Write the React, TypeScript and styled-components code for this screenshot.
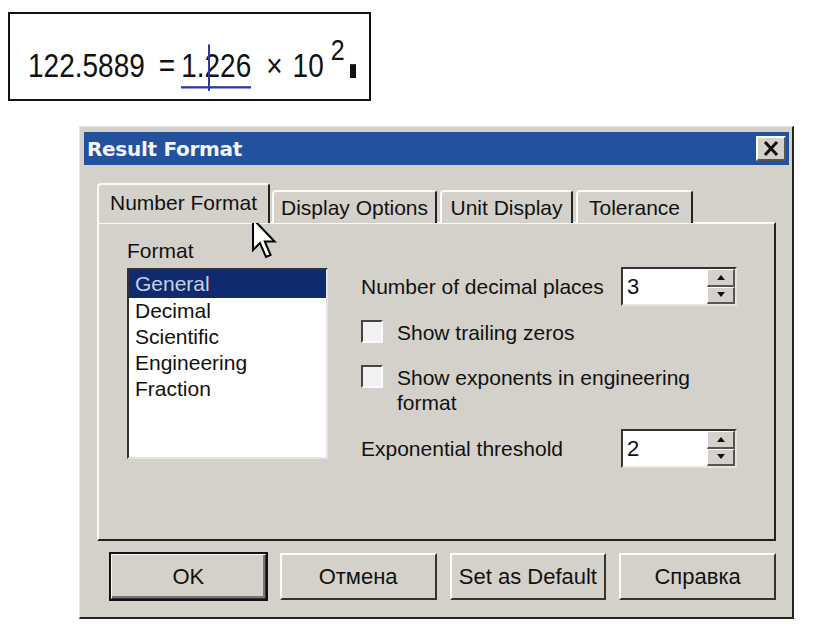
import React from "react";
import styled, { createGlobalStyle } from "styled-components";

const GlobalStyle = createGlobalStyle`
  html, body {
    margin: 0;
    padding: 0;
    background: #ffffff;
  }
  body {
    font-family: "Liberation Sans", Arial, sans-serif;
  }
`;

const Page = styled.div`
  position: relative;
  width: 816px;
  height: 638px;
  padding-top: 12px;
  box-sizing: border-box;
  overflow: hidden;
`;

// 수식 결과 박스
const FormulaBox = styled.div`
  margin-left: 8px;
  width: 363px;
  height: 89px;
  box-sizing: border-box;
  border: 2px solid #111;
  padding: 38px 0 0 18px;
  font-family: "Liberation Sans", Arial, sans-serif;
  font-size: 28px;
  line-height: 32px;
  color: #111;
  white-space: nowrap;
`;

const FormulaLine = styled.span`
  display: inline-block;
  transform: scaleY(1.16);
  transform-origin: 0 80%;
`;

const Token = styled.span<{ $gap?: number }>`
  margin-left: ${(p) => p.$gap ?? 0}px;
`;

const Underlined = styled.span<{ $gap?: number }>`
  position: relative;
  margin-left: ${(p) => p.$gap ?? 0}px;
  border-bottom: 2px solid #2d3aa6;
  padding-bottom: 2px;
`;

const Caret = styled.span`
  position: absolute;
  left: 27px;
  top: -3px;
  bottom: -4px;
  width: 2px;
  background: #2d3aa6;
`;

const Sup = styled.span<{ $gap?: number }>`
  font-size: 25px;
  line-height: 0;
  vertical-align: 15px;
  margin-left: ${(p) => p.$gap ?? 0}px;
`;

const Marker = styled.span`
  display: inline-block;
  width: 6px;
  height: 12px;
  background: #111;
  margin-left: 5px;
  vertical-align: -1px;
`;

// 대화상자
const Dialog = styled.div`
  margin: 25px 0 0 79px;
  width: 715px;
  height: 493px;
  box-sizing: border-box;
  background: #d4d1cb;
  border-top: 1px solid #e8e6e2;
  border-left: 1px solid #e8e6e2;
  border-right: 2px solid #222;
  border-bottom: 2px solid #222;
  padding: 5px 3px 0 4px;
  display: flex;
  flex-direction: column;
`;

const TitleBar = styled.div`
  height: 33px;
  background: #22519e;
  display: flex;
  align-items: center;
  justify-content: space-between;
  padding: 0 3px 0 3px;
`;

const Title = styled.span`
  color: #f4f4f4;
  font-family: "DejaVu Sans", "Liberation Sans", sans-serif;
  font-weight: bold;
  font-size: 20px;
  letter-spacing: -0.3px;
`;

const CloseButton = styled.div`
  width: 30px;
  height: 25px;
  box-sizing: border-box;
  background: #d4d1cb;
  border-top: 2px solid #fff;
  border-left: 2px solid #fff;
  border-right: 2px solid #555;
  border-bottom: 2px solid #555;
  display: flex;
  align-items: center;
  justify-content: center;
`;

const Body = styled.div`
  flex: 1;
  display: flex;
  flex-direction: column;
  padding: 18px 13px 0 13px;
`;

const TabRow = styled.div`
  display: flex;
  align-items: flex-end;
  height: 40px;
  position: relative;
  z-index: 1;
  margin-bottom: -1px;
`;

const Tab = styled.div<{ $active?: boolean; $width: number }>`
  width: ${(p) => p.$width}px;
  height: ${(p) => (p.$active ? 40 : 33)}px;
  box-sizing: border-box;
  background: #d4d1cb;
  border-top: 2px solid #fafafa;
  border-left: 2px solid #fafafa;
  border-right: 2px solid #222;
  border-top-left-radius: 4px;
  border-top-right-radius: 3px;
  margin-right: ${(p) => (p.$active ? 2 : 3)}px;
  display: flex;
  align-items: ${(p) => (p.$active ? "flex-start" : "center")};
  justify-content: center;
  padding-top: ${(p) => (p.$active ? 6 : 0)}px;
  font-size: 21px;
  color: #111;
  white-space: nowrap;
`;

const Panel = styled.div`
  height: 319px;
  box-sizing: border-box;
  border-top: 2px solid #fafafa;
  border-left: 2px solid #fafafa;
  border-right: 2px solid #222;
  border-bottom: 2px solid #222;
  display: flex;
  padding: 16px 0 0 28px;
  gap: 33px;
`;

const FormatColumn = styled.div`
  display: flex;
  flex-direction: column;
`;

const Label = styled.div`
  font-size: 21px;
  color: #111;
  height: 28px;
  line-height: 22px;
`;

const ListBox = styled.div`
  width: 201px;
  height: 191px;
  box-sizing: border-box;
  background: #fff;
  border-top: 2px solid #333;
  border-left: 2px solid #333;
  border-right: 2px solid #e6e4e0;
  border-bottom: 2px solid #e6e4e0;
`;

const ListItem = styled.div<{ $selected?: boolean }>`
  height: ${(p) => (p.$selected ? 28 : 26)}px;
  line-height: ${(p) => (p.$selected ? 28 : 26)}px;
  padding-left: 6px;
  font-size: 21px;
  background: ${(p) => (p.$selected ? "#0f2a6e" : "transparent")};
  color: ${(p) => (p.$selected ? "#c9cfe0" : "#111")};
`;

const OptionsColumn = styled.div`
  display: flex;
  flex-direction: column;
  padding-top: 27px;
`;

const FieldRow = styled.div<{ $top: number }>`
  display: flex;
  align-items: center;
  width: 376px;
  justify-content: space-between;
  margin-top: ${(p) => p.$top}px;
`;

const FieldLabel = styled.span`
  font-size: 21px;
  color: #111;
`;

const Spin = styled.div`
  width: 116px;
  height: 39px;
  box-sizing: border-box;
  background: #fff;
  border-top: 2px solid #333;
  border-left: 2px solid #333;
  border-right: 2px solid #e6e4e0;
  border-bottom: 2px solid #e6e4e0;
  display: flex;
`;

const SpinValue = styled.div`
  flex: 1;
  font-size: 22px;
  color: #111;
  display: flex;
  align-items: center;
  padding-left: 4px;
`;

const SpinButtons = styled.div`
  width: 28px;
  display: flex;
  flex-direction: column;
`;

const SpinButton = styled.div`
  flex: 1;
  box-sizing: border-box;
  background: #d4d1cb;
  border-top: 1px solid #fff;
  border-left: 1px solid #fff;
  border-right: 2px solid #555;
  border-bottom: 2px solid #555;
  display: flex;
  align-items: center;
  justify-content: center;
`;

const CheckRow = styled.div<{ $top: number }>`
  display: flex;
  align-items: flex-start;
  margin-top: ${(p) => p.$top}px;
  gap: 14px;
`;

const CheckBox = styled.div`
  width: 22px;
  height: 23px;
  flex-shrink: 0;
  box-sizing: border-box;
  background: #f2f1ef;
  border-top: 2px solid #444;
  border-left: 2px solid #444;
  border-right: 2px solid #fafafa;
  border-bottom: 2px solid #fafafa;
`;

const CheckText = styled.span`
  font-size: 21px;
  line-height: 25px;
  color: #111;
  width: 320px;
`;

const ButtonRow = styled.div`
  display: flex;
  gap: 13px;
  padding: 12px 0 0 13px;
`;

const Button = styled.div<{ $default?: boolean }>`
  width: 157px;
  height: 47px;
  box-sizing: border-box;
  background: #d4d1cb;
  display: flex;
  align-items: center;
  justify-content: center;
  font-size: 22px;
  color: #111;
  border-top: 2px solid #fafafa;
  border-left: 2px solid #fafafa;
  border-right: 2px solid #333;
  border-bottom: 2px solid #333;
  ${(p) =>
    p.$default &&
    `
    outline: 2px solid #111;
    outline-offset: -1px;
    box-shadow: inset -2px -2px 0 #777;
  `}
`;

const Pointer = styled.svg`
  position: absolute;
  left: 252px;
  top: 218px;
`;

const Triangle: React.FC<{ up?: boolean }> = ({ up }) => (
  <svg width="8" height="5" viewBox="0 0 8 5">
    <path d={up ? "M0 5 L4 0 L8 5 Z" : "M0 0 L8 0 L4 5 Z"} fill="#111" />
  </svg>
);

const SpinBox: React.FC<{ value: string }> = ({ value }) => (
  <Spin>
    <SpinValue>{value}</SpinValue>
    <SpinButtons>
      <SpinButton>
        <Triangle up />
      </SpinButton>
      <SpinButton>
        <Triangle />
      </SpinButton>
    </SpinButtons>
  </Spin>
);

const formats = ["General", "Decimal", "Scientific", "Engineering", "Fraction"];

const App: React.FC = () => {
  return (
    <Page>
      <GlobalStyle />
      <FormulaBox>
        <FormulaLine>
          <Token>122.5889</Token>
          <Token $gap={14}>=</Token>
          <Underlined $gap={6}>
            1.226
            <Caret />
          </Underlined>
          <Token $gap={15}>×</Token>
          <Token $gap={10}>10</Token>
          <Sup $gap={7}>2</Sup>
          <Marker />
        </FormulaLine>
      </FormulaBox>

      <Dialog>
        <TitleBar>
          <Title>Result Format</Title>
          <CloseButton>
            <svg width="16" height="15" viewBox="0 0 16 15">
              <path d="M2 1 L14 14 M14 1 L2 14" stroke="#111" strokeWidth="3" />
            </svg>
          </CloseButton>
        </TitleBar>

        <Body>
          <TabRow>
            <Tab $active $width={173}>Number Format</Tab>
            <Tab $width={165}>Display Options</Tab>
            <Tab $width={133}>Unit Display</Tab>
            <Tab $width={117}>Tolerance</Tab>
          </TabRow>
          <Panel>
            <FormatColumn>
              <Label>Format</Label>
              <ListBox>
                {formats.map((f, i) => (
                  <ListItem key={f} $selected={i === 0}>
                    {f}
                  </ListItem>
                ))}
              </ListBox>
            </FormatColumn>

            <OptionsColumn>
              <FieldRow $top={0}>
                <FieldLabel>Number of decimal places</FieldLabel>
                <SpinBox value="3" />
              </FieldRow>
              <CheckRow $top={14}>
                <CheckBox />
                <CheckText>Show trailing zeros</CheckText>
              </CheckRow>
              <CheckRow $top={20}>
                <CheckBox />
                <CheckText>Show exponents in engineering format</CheckText>
              </CheckRow>
              <FieldRow $top={14}>
                <FieldLabel>Exponential threshold</FieldLabel>
                <SpinBox value="2" />
              </FieldRow>
            </OptionsColumn>
          </Panel>

          <ButtonRow>
            <Button $default>OK</Button>
            <Button>Отмена</Button>
            <Button>Set as Default</Button>
            <Button>Справка</Button>
          </ButtonRow>
        </Body>
      </Dialog>

      <Pointer width="26" height="42" viewBox="0 0 13 21">
        <path
          d="M0.5 0.5 L0.5 16 L4 12.5 L7 19.5 L9.3 18.5 L6.4 11.8 L11.3 11.8 Z"
          fill="#fff"
          stroke="#000"
          strokeWidth="1"
          strokeLinejoin="miter"
        />
      </Pointer>
    </Page>
  );
};

export default App;
